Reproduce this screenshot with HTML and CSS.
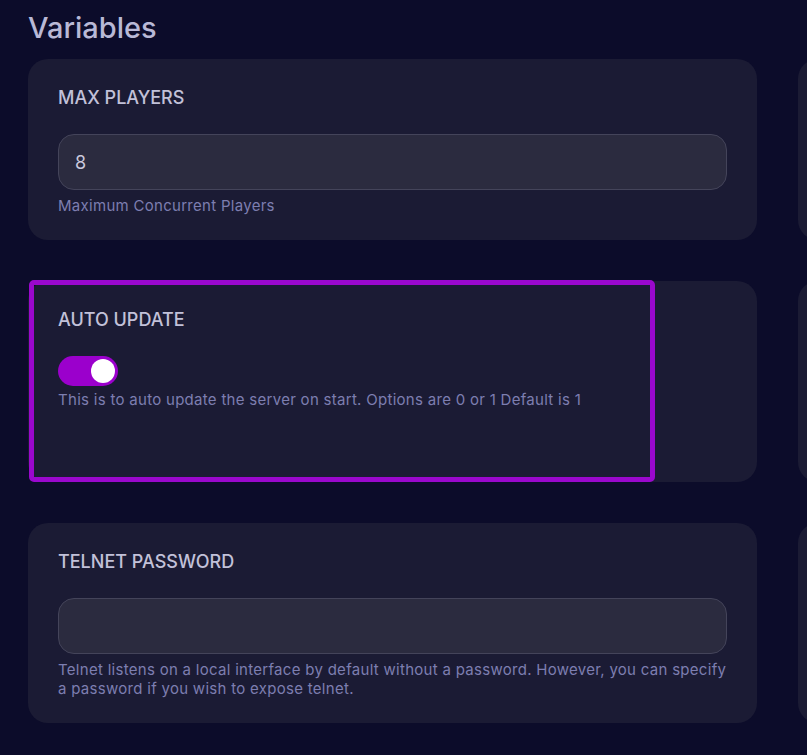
FILE: index.html
```html
<!DOCTYPE html>
<html>
<head>
<meta charset="utf-8">
<link rel="stylesheet" href="styles.css">
</head>
<body>
<main class="page">
  <h1 class="title">Variables</h1>
  <div class="grid">
    <section class="card">
      <div class="label">MAX PLAYERS</div>
      <div class="input">8</div>
      <p class="help">Maximum Concurrent Players</p>
    </section>
    <section class="card"></section>
    <section class="card card-hl">
      <div class="label">AUTO UPDATE</div>
      <div class="toggle"><span class="knob"></span></div>
      <p class="help help-toggle">This is to auto update the server on start. Options are 0 or 1 Default is 1</p>
      <div class="highlight"></div>
    </section>
    <section class="card"></section>
    <section class="card">
      <div class="label">TELNET PASSWORD</div>
      <div class="input"></div>
      <p class="help">Telnet listens on a local interface by default without a password. However, you can specify a password if you wish to expose telnet.</p>
    </section>
    <section class="card"></section>
  </div>
</main>
</body>
</html>
```
FILE: styles.css
```css
html, body {
  margin: 0;
  padding: 0;
  background: #0c0c2a;
  overflow: hidden;
}
.page {
  padding: 10px 0 0 28px;
  font-family: Inter, "Noto Sans", sans-serif;
  overflow: hidden;
}
.title {
  margin: 0 0 13px 0;
  font-size: 29px;
  line-height: 36px;
  font-weight: 500;
  color: #b9b9d6;
}
.grid {
  display: grid;
  grid-template-columns: 729px 729px;
  grid-template-rows: 181px 201px 200px;
  column-gap: 41px;
  row-gap: 41px;
}
.card {
  position: relative;
  background: #1b1b34;
  border-radius: 20px;
  padding: 27px 30px 0 30px;
  box-sizing: border-box;
}
.label {
  font-size: 18px;
  line-height: 24px;
  font-weight: 500;
  color: #c2c1d9;
}
.input {
  margin-top: 24px;
  height: 56px;
  box-sizing: border-box;
  background: #2b2b3f;
  border: 1px solid #44445a;
  border-radius: 16px;
  padding: 0 16px;
  display: flex;
  align-items: center;
  font-size: 18px;
  color: #c9c8dc;
}
.help {
  margin: 6px -6px 0 0;
  font-size: 15px;
  line-height: 19px;
  letter-spacing: 0.29px;
  color: #7d7eb0;
}
.help-toggle {
  margin-top: 4px;
}
.toggle {
  margin-top: 24px;
  width: 60px;
  height: 30px;
  border-radius: 15px;
  background: #9b00cc;
  display: flex;
  align-items: center;
  justify-content: flex-end;
  padding: 0 3px;
  box-sizing: border-box;
}
.knob {
  width: 24px;
  height: 24px;
  border-radius: 50%;
  background: #ffffff;
}
.highlight {
  position: absolute;
  left: 1px;
  top: -1px;
  width: 626px;
  height: 202px;
  box-sizing: border-box;
  border: 5px solid #9a08cd;
  border-radius: 5px;
}
```
